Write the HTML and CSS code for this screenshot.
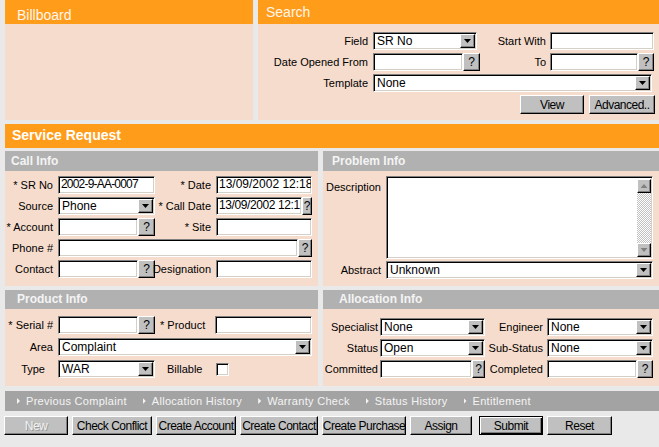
FILE: index.html
```html
<!DOCTYPE html>
<html>
<head>
<meta charset="utf-8">
<title>Service Request</title>
<link rel="stylesheet" href="styles.css">
</head>
<body>
<div class="page">
  <div class="top">
    <section class="panel billboard">
      <div class="ohead bb">Billboard</div>
      <div class="pbody"></div>
    </section>
    <section class="panel search">
      <div class="ohead">Search</div>
      <div class="pbody grid g-search">
        <span class="lbl">Field</span>
        <div class="ctl pr3"><div class="sel"><span>SR No</span><i class="arr"></i></div></div>
        <span class="lbl lbl2">Start With</span>
        <div class="ctl"><div class="tb"></div></div>

        <span class="lbl">Date Opened From</span>
        <div class="ctl"><div class="tb"></div><div class="q q17">?</div></div>
        <span class="lbl lbl2">To</span>
        <div class="ctl"><div class="tb"></div><div class="q q16">?</div></div>

        <span class="lbl">Template</span>
        <div class="ctl span3 pr2"><div class="sel"><span>None</span><i class="arr"></i></div></div>

        <div class="bar span4">
          <button type="button" class="btn w64">View</button>
          <button type="button" class="btn w66">Advanced..</button>
        </div>
      </div>
    </section>
  </div>

  <div class="srhead">Service Request</div>

  <div class="row2 r1">
    <section class="panel col-l">
      <div class="ghead ph6">Call Info</div>
      <div class="pbody grid g-call">
        <span class="lbl">* SR No</span>
        <div class="ctl"><div class="tb narrow">2002-9-AA-0007</div></div>
        <span class="lbl">* Date</span>
        <div class="ctl"><div class="tb">13/09/2002 12:18</div></div>

        <span class="lbl">Source</span>
        <div class="ctl"><div class="sel"><span>Phone</span><i class="arr"></i></div></div>
        <span class="lbl">* Call Date</span>
        <div class="ctl"><div class="tb tight">13/09/2002 12:1</div><div class="q q10">?</div></div>

        <span class="lbl">* Account</span>
        <div class="ctl"><div class="tb"></div><div class="q q17">?</div></div>
        <span class="lbl">* Site</span>
        <div class="ctl"><div class="tb"></div></div>

        <span class="lbl">Phone #</span>
        <div class="ctl span3"><div class="tb"></div><div class="q q14">?</div></div>

        <span class="lbl">Contact</span>
        <div class="ctl"><div class="tb"></div><div class="q q17">?</div></div>
        <span class="lbl">Designation</span>
        <div class="ctl"><div class="tb"></div></div>
      </div>
    </section>
    <section class="panel col-r">
      <div class="ghead ph9">Problem Info</div>
      <div class="pbody grid g-prob">
        <span class="lbl top">Description</span>
        <div class="ta">
          <div class="sb">
            <div class="sbb"><i class="tri up"></i></div>
            <div class="sbb"><i class="tri down"></i></div>
          </div>
        </div>
        <span class="lbl">Abstract</span>
        <div class="ctl"><div class="sel"><span>Unknown</span><i class="arr"></i></div></div>
      </div>
    </section>
  </div>

  <div class="row2 r2">
    <section class="panel col-l">
      <div class="ghead ph12">Product Info</div>
      <div class="pbody grid g-prod">
        <span class="lbl">* Serial #</span>
        <div class="ctl"><div class="tb"></div><div class="q q17">?</div></div>
        <span class="lbl left">* Product</span>
        <div class="ctl"><div class="tb"></div></div>

        <span class="lbl">Area</span>
        <div class="ctl span3"><div class="sel"><span>Complaint</span><i class="arr"></i></div></div>

        <span class="lbl type">Type</span>
        <div class="ctl"><div class="sel"><span>WAR</span><i class="arr"></i></div></div>
        <span class="lbl left bill">Billable</span>
        <div class="ctl"><div class="cb"></div></div>
      </div>
    </section>
    <section class="panel col-r">
      <div class="ghead ph16">Allocation Info</div>
      <div class="pbody grid g-alloc">
        <span class="lbl">Specialist</span>
        <div class="ctl"><div class="sel"><span>None</span><i class="arr"></i></div></div>
        <span class="lbl lbl2">Engineer</span>
        <div class="ctl"><div class="sel"><span>None</span><i class="arr"></i></div></div>

        <span class="lbl">Status</span>
        <div class="ctl"><div class="sel"><span>Open</span><i class="arr"></i></div></div>
        <span class="lbl lbl2">Sub-Status</span>
        <div class="ctl"><div class="sel"><span>None</span><i class="arr"></i></div></div>

        <span class="lbl">Committed</span>
        <div class="ctl"><div class="tb"></div><div class="q q13">?</div></div>
        <span class="lbl lbl2">Completed</span>
        <div class="ctl"><div class="tb"></div><div class="q q16">?</div></div>
      </div>
    </section>
  </div>

  <nav class="nav">
    <span>Previous Complaint</span>
    <span>Allocation History</span>
    <span>Warranty Check</span>
    <span>Status History</span>
    <span>Entitlement</span>
  </nav>

  <div class="btns">
    <button type="button" class="btn w64 dis">New</button>
    <button type="button" class="btn w80">Check Conflict</button>
    <button type="button" class="btn w80">Create Account</button>
    <button type="button" class="btn w78">Create Contact</button>
    <button type="button" class="btn w84">Create Purchase</button>
    <button type="button" class="btn w62">Assign</button>
    <button type="button" class="btn w64 def">Submit</button>
    <button type="button" class="btn w65">Reset</button>
  </div>
</div>
</body>
</html>
```

FILE: styles.css
```css
* { box-sizing: border-box; }
html, body { margin: 0; padding: 0; }
body {
  background: #e9e9e9;
  font-family: "Liberation Sans", Arial, sans-serif;
  font-size: 11px;
  color: #000;
  width: 659px;
  height: 447px;
  overflow: hidden;
}
.page { width: 670px; padding-left: 5px; }

.top { display: flex; gap: 5px; height: 120px; }
.panel { display: flex; flex-direction: column; }
.billboard { width: 248px; }
.search { flex: 1; }

.ohead {
  flex: none;
  background: #ff9c1a;
  color: #fff6ec;
  font-size: 14px;
  height: 24px;
  line-height: 24px;
  padding-left: 8px;
  overflow: hidden;
}
.ohead.bb { padding-top: 3px; padding-left: 12px; }
.pbody { background: #f6dccd; flex: 1; }

.srhead {
  margin-top: 4px;
  background: #ff9c1a;
  color: #fff;
  font-weight: bold;
  font-size: 14px;
  height: 24px;
  line-height: 22px;
  padding-left: 7px;
}

.row2 { display: flex; gap: 5px; }
.row2.r1 { margin-top: 3px; height: 135px; }
.row2.r2 { margin-top: 4px; height: 96px; }
.col-l { width: 313px; }
.col-r { flex: 1; }

.ghead {
  flex: none;
  background: #b1b1b1;
  color: #f4f4f4;
  font-weight: bold;
  font-size: 12px;
  height: 20px;
  line-height: 20px;
}
.r2 .ghead { height: 19px; line-height: 19px; }
.ph6 { padding-left: 6px; }
.ph9 { padding-left: 9px; }
.ph12 { padding-left: 12px; }
.ph16 { padding-left: 16px; }

/* grids */
.grid { display: grid; align-content: start; }
.g-search {
  grid-template-columns: 115px 107px 70px 104px;
  grid-template-rows: 18px 18px 18px 19px;
  row-gap: 3px;
  padding-top: 8px;
}
.g-call {
  grid-template-columns: 53px 97px 61px 96px;
  grid-auto-rows: 18px;
  row-gap: 3px;
  padding-top: 5px;
}
.g-prob {
  grid-template-columns: 63px 267px;
  grid-template-rows: 83px 18px;
  row-gap: 2px;
  padding-top: 5px;
}
.g-prod {
  grid-template-columns: 53px 97px 60px 97px;
  grid-auto-rows: 18px;
  row-gap: 4px;
  padding-top: 7px;
}
.g-alloc {
  grid-template-columns: 57px 105px 62px 106px;
  grid-auto-rows: 18px;
  row-gap: 3px;
  padding-top: 9px;
}

.lbl {
  display: flex;
  align-items: center;
  justify-content: flex-end;
  white-space: nowrap;
  padding-right: 5px;
}
.lbl.lbl2 { padding-right: 4px; }
.g-alloc .lbl { padding-right: 2px; }
.g-alloc .lbl.lbl2 { padding-right: 4px; }
.lbl.left { justify-content: flex-start; padding-left: 5px; padding-right: 0; }
.lbl.top { align-items: flex-start; padding-top: 5px; line-height: 13px; }
.lbl.type { padding-right: 13px; }
.lbl.bill { padding-left: 12px; }

.span3 { grid-column: span 3; }
.span4 { grid-column: 1 / span 4; }
.pr3 { padding-right: 3px; }
.pr2 { padding-right: 2px; }

.ctl { display: flex; align-items: stretch; min-width: 0; }

/* text box */
.tb {
  flex: 1;
  min-width: 0;
  height: 18px;
  background: #fff;
  border: 1px solid;
  border-color: #808080 #fff #fff #808080;
  box-shadow: inset 1px 1px 0 #000, inset -1px -1px 0 #d4d0c8;
  font-size: 12px;
  line-height: 15px;
  padding-left: 2px;
  white-space: nowrap;
  overflow: hidden;
}
.tb.narrow { letter-spacing: -0.8px; }
.tb.tight { letter-spacing: -0.4px; }

/* select */
.sel {
  flex: 1;
  min-width: 0;
  height: 18px;
  display: flex;
  background: #fff;
  border: 1px solid;
  border-color: #808080 #fff #fff #808080;
  box-shadow: inset 1px 1px 0 #000, inset -1px -1px 0 #d4d0c8;
  font-size: 12px;
  line-height: 15px;
  padding-left: 3px;
}
.sel span { flex: 1; overflow: hidden; white-space: nowrap; padding-top: 1px; }
.arr {
  flex: none;
  width: 15px;
  margin: 1px 1px 1px 0;
  background: #c0c0c0;
  border: 1px solid;
  border-color: #fff #000 #000 #fff;
  box-shadow: inset -1px -1px 0 #808080;
  display: flex;
  align-items: center;
  justify-content: center;
}
.arr::after {
  content: "";
  width: 7px;
  height: 4px;
  background: #000;
  clip-path: polygon(0 0, 100% 0, 50% 100%);
}

/* ? button */
.q {
  flex: none;
  height: 18px;
  background: #c0c0c0;
  border: 1px solid;
  border-color: #fff #000 #000 #fff;
  box-shadow: inset -1px -1px 0 #808080;
  font-size: 12px;
  display: flex;
  align-items: center;
  justify-content: center;
  overflow: hidden;
}
.q10 { width: 10px; }
.q13 { width: 13px; }
.q14 { width: 14px; }
.q16 { width: 16px; }
.q17 { width: 17px; }

/* textarea */
.ta {
  display: flex;
  justify-content: flex-end;
  background: #fff;
  border: 1px solid;
  border-color: #808080 #fff #fff #808080;
  box-shadow: inset 1px 1px 0 #000, inset -1px -1px 0 #d4d0c8;
  padding: 2px 1px 1px 2px;
}
.sb {
  width: 14px;
  display: flex;
  flex-direction: column;
  justify-content: space-between;
  background: repeating-conic-gradient(#c0c0c0 0 25%, #fff 0 50%) 0 0 / 2px 2px;
}
.sbb {
  height: 14px;
  background: #c0c0c0;
  border: 1px solid;
  border-color: #fff #000 #000 #fff;
  box-shadow: inset -1px -1px 0 #808080;
  display: flex;
  align-items: center;
  justify-content: center;
}
.tri { width: 7px; height: 4px; background: #808080; }
.tri.up { clip-path: polygon(50% 0, 100% 100%, 0 100%); }
.tri.down { clip-path: polygon(0 0, 100% 0, 50% 100%); }

/* checkbox */
.cb {
  align-self: center;
  margin-left: 1px;
  width: 13px;
  height: 13px;
  background: #fff;
  border: 1px solid;
  border-color: #808080 #fff #fff #808080;
  box-shadow: inset 1px 1px 0 #000, inset -1px -1px 0 #d4d0c8;
}

/* nav */
.nav {
  margin-top: 5px;
  height: 20px;
  background: #a3a3a3;
  display: flex;
  align-items: center;
  gap: 16px;
  padding-left: 12px;
  color: #f4f4f4;
  font-size: 11px;
  letter-spacing: 0.3px;
  line-height: 20px;
}
.nav span { display: flex; align-items: center; white-space: nowrap; }
.nav span::before {
  content: "";
  width: 3px;
  height: 6px;
  background: #f4f4f4;
  clip-path: polygon(0 0, 100% 50%, 0 100%);
  margin-right: 6px;
}

/* buttons */
.bar { display: flex; justify-content: flex-end; gap: 5px; margin-right: -1px; }
.btns { margin-top: 5px; display: flex; gap: 4px; margin-left: -1px; }
.btn {
  height: 19px;
  padding: 0;
  margin: 0;
  background: #c0c0c0;
  border: 1px solid;
  border-color: #fff #000 #000 #fff;
  border-radius: 0;
  box-shadow: inset -1px -1px 0 #808080;
  font-family: "Liberation Sans", Arial, sans-serif;
  font-size: 12px;
  letter-spacing: -0.5px;
  color: #000;
  display: flex;
  align-items: center;
  justify-content: center;
  white-space: nowrap;
  overflow: hidden;
}
.btn.dis { color: #f2f2f2; text-shadow: 1px 1px 0 #9a9a9a; }
.btn.def {
  margin-left: 3px;
  border-color: #000;
  box-shadow: inset 1px 1px 0 #fff, inset -1px -1px 0 #000, inset -2px -2px 0 #808080;
}
.w62 { width: 62px; }
.w64 { width: 64px; }
.w65 { width: 65px; }
.w66 { width: 66px; }
.w78 { width: 78px; }
.w80 { width: 80px; }
.w84 { width: 84px; }
```
